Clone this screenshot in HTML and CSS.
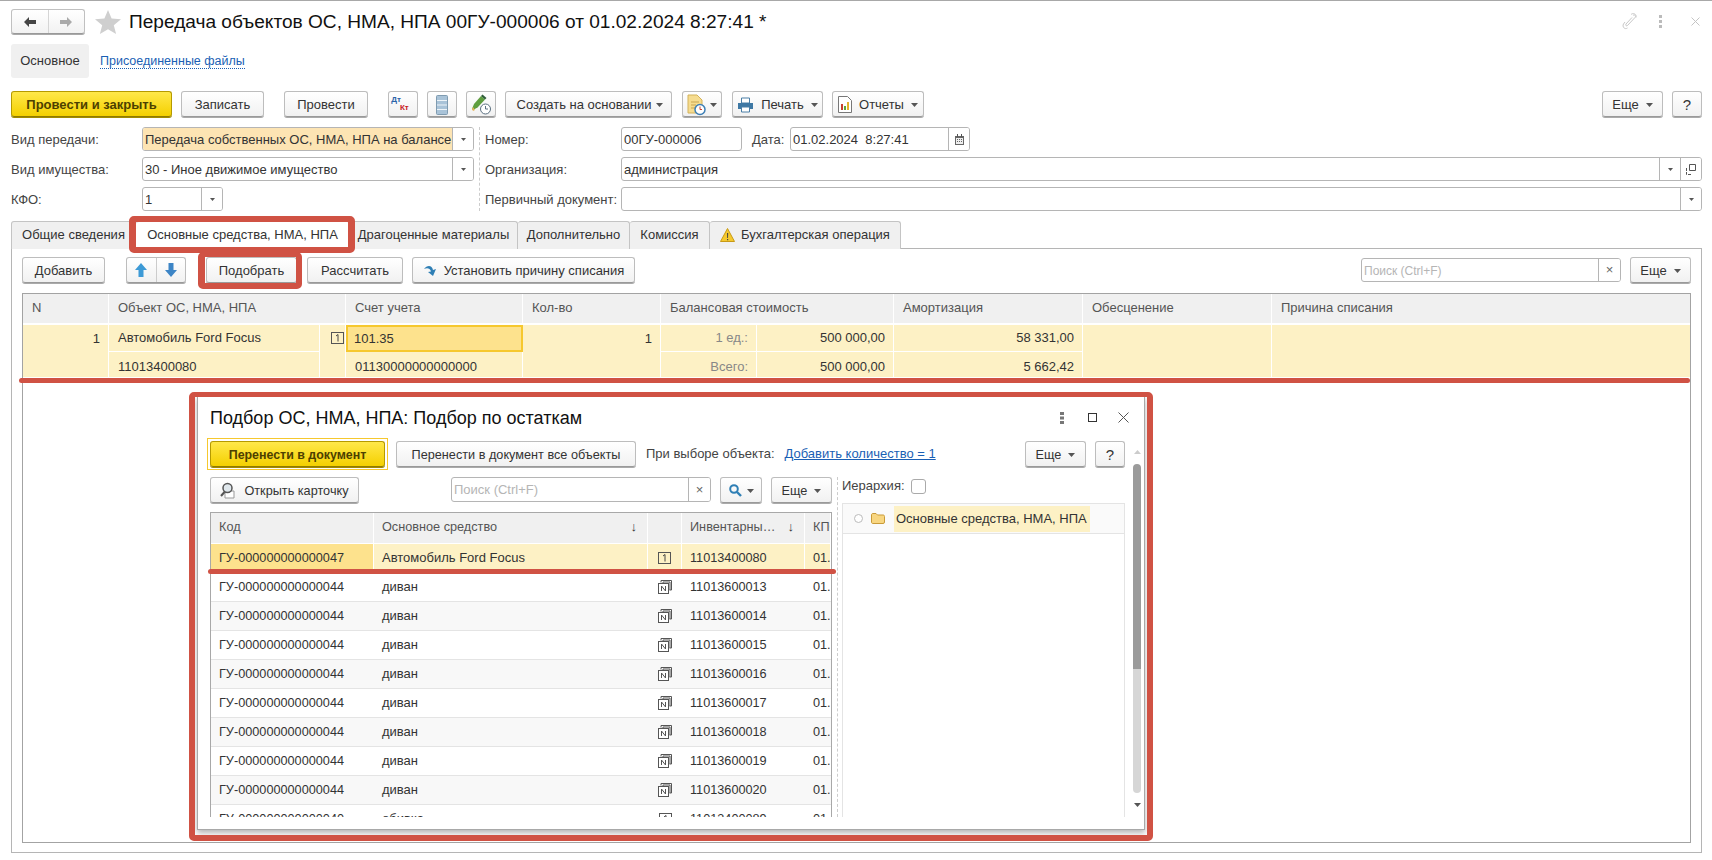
FILE: index.html
```html
<!DOCTYPE html>
<html lang="ru">
<head>
<meta charset="utf-8">
<title>Передача объектов ОС, НМА, НПА</title>
<link rel="stylesheet" href="styles.css">
</head>
<body>
<svg class="defs" aria-hidden="true">
  <symbol id="i-one" viewBox="0 0 13 12"><rect x=".5" y=".5" width="12" height="11" fill="none" stroke="#555"/><path d="M5 4l2-1.500V9.500" fill="none" stroke="#444"/></symbol>
  <symbol id="i-n" viewBox="0 0 14 14"><path d="M3 2.500V.5h10.500v9.500H11.500M5 3V2h7v8" fill="none" stroke="#555"/><rect x=".5" y="3.500" width="10" height="10" fill="#fff" stroke="#555"/><path d="M3.500 11V6l4 5V6" fill="none" stroke="#555"/></symbol>
  <symbol id="i-drop" viewBox="0 0 7 4"><path d="M0 0h7L3.500 4z" fill="#555"/></symbol>
</svg>
<div class="page">
  <header class="titlebar">
    <div class="navgroup">
      <button class="navbtn"><svg width="14" height="12" viewBox="0 0 14 12"><path d="M6 1 1 6l5 5V8h7V4H6z" fill="#444"/></svg></button>
      <button class="navbtn"><svg width="14" height="12" viewBox="0 0 14 12"><path d="M8 1l5 5-5 5V8H1V4h7z" fill="#aaa"/></svg></button>
    </div>
    <svg class="star" width="26" height="24" viewBox="0 0 26 24"><path d="M13 0l3.600 8.600 9.400.7-7.200 6 2.300 8.700-8.100-4.800L4.900 24l2.300-8.700L0 9.300l9.400-.7z" fill="#cfcfcf"/></svg>
    <h1 class="doc-title">Передача объектов ОС, НМА, НПА 00ГУ-000006 от 01.02.2024 8:27:41 *</h1>
    <div class="win-icons">
      <svg class="ic-link" width="17" height="17" viewBox="0 0 17 17"><path d="M11 2.500c1.500-1.500 3.500.5 2 2l-7.500 8c-1 1-2.500-.3-1.500-1.500l6-6.500M9 1.500c2-2 6-.5 5 3M3 9l-1.500 2c-1.500 2.500 1 6 4 4" fill="none" stroke="#c8c8c8"/></svg>
      <svg class="ic-dots" width="3" height="13" viewBox="0 0 3 13"><path d="M0 0h3v3H0zM0 5h3v3H0zM0 10h3v3H0z" fill="#bbb"/></svg>
      <svg class="ic-x" width="9" height="9" viewBox="0 0 9 9"><path d="M.5.500l8 8m0-8l-8 8" stroke="#c4c4c4" fill="none"/></svg>
    </div>
  </header>

  <nav class="sections">
    <a class="section section-active">Основное</a>
    <a class="section section-link">Присоединенные файлы</a>
  </nav>

  <div class="commands">
    <button class="btn btn-primary w-post">Провести и закрыть</button>
    <button class="btn w-save">Записать</button>
    <button class="btn w-run">Провести</button>
    <button class="btn w-ico dtkt"><span class="dt">Дт</span><span class="kt">Кт</span></button>
    <button class="btn w-ico2"><svg width="12" height="20" viewBox="0 0 12 20"><rect x=".5" y=".5" width="11" height="19" rx="1" fill="#a9c3d8" stroke="#7f9bb0"/><path d="M1 5.500h10M1 10h10M1 14.500h10" stroke="#eef4f8"/></svg></button>
    <button class="btn w-ico3"><svg width="22" height="22" viewBox="0 0 22 22"><path d="M2 15l2-5L11 2l4 3.500-7.500 8L3 16z" fill="#5f9e3f"/><path d="M11 2l1.500-1.500 4 3.500L15 5.500z" fill="#2f5d3a"/><path d="M2 15l1 2 2-1-2-3z" fill="#e5b25a"/><circle cx="15.500" cy="15" r="5" fill="#fff" stroke="#5a6f80"/><path d="M15.500 12v3h2.500" fill="none" stroke="#5a6f80"/></svg></button>
    <button class="btn w-create"><span>Создать на основании</span><svg class="drop" width="7" height="4"><use href="#i-drop"/></svg></button>
    <button class="btn w-docs"><svg width="20" height="22" viewBox="0 0 20 22"><path d="M1 1h9l5 5v13H1z" fill="#f6dc8f" stroke="#d3b25a"/><path d="M4 8h8M4 11h5M4 14h4" stroke="#c9a551"/><circle cx="13" cy="15.500" r="5" fill="#fff" stroke="#3d7fb5" stroke-width="1.500"/><path d="M13 12.500v3h2" fill="none" stroke="#c8402f"/></svg><svg class="drop" width="7" height="4"><use href="#i-drop"/></svg></button>
    <button class="btn w-print"><svg width="17" height="16" viewBox="0 0 17 16"><path d="M4.500 1h8v5h-8z" fill="#fff" stroke="#4a7ea6"/><path d="M1 6h15v6h-3v-2H4v2H1z" fill="#3e78a4"/><path d="M4.500 10h8v5h-8z" fill="#fff" stroke="#4a7ea6"/></svg><span>Печать</span><svg class="drop" width="7" height="4"><use href="#i-drop"/></svg></button>
    <button class="btn w-rep"><svg width="14" height="17" viewBox="0 0 14 17"><path d="M.5.500h9l4 4v12H.5z" fill="#fff" stroke="#777"/><path d="M3 8h2v6H3z" fill="#c8402f"/><path d="M6 10h2v4H6z" fill="#5fa53c"/><path d="M9 6h2v8H9z" fill="#e5b32a"/></svg><span>Отчеты</span><svg class="drop" width="7" height="4"><use href="#i-drop"/></svg></button>
    <button class="btn w-more ml-auto">Еще <svg class="drop" width="7" height="4"><use href="#i-drop"/></svg></button>
    <button class="btn w-help">?</button>
  </div>

  <section class="form">
    <label class="lbl r1 c1">Вид передачи:</label>
    <div class="field r1 c2 field-warn"><span class="val">Передача собственных ОС, НМА, НПА на балансе</span><span class="fbtn"><svg width="5" height="3"><use href="#i-drop"/></svg></span></div>
    <label class="lbl r2 c1">Вид имущества:</label>
    <div class="field r2 c2"><span class="val">30 - Иное движимое имущество</span><span class="fbtn"><svg width="5" height="3"><use href="#i-drop"/></svg></span></div>
    <label class="lbl r3 c1">КФО:</label>
    <div class="field r3 c2 field-kfo"><span class="val">1</span><span class="fbtn"><svg width="5" height="3"><use href="#i-drop"/></svg></span></div>
    <div class="vsep"></div>
    <label class="lbl r1 c4">Номер:</label>
    <div class="r1 c5 num-date">
      <div class="field field-num"><span class="val">00ГУ-000006</span></div>
      <label class="lbl lbl-date">Дата:</label>
      <div class="field field-date"><span class="val">01.02.2024&nbsp; 8:27:41</span><span class="fbtn"><svg width="9" height="11" viewBox="0 0 9 11"><path d="M0 2h9v9H0z" fill="#666"/><path d="M1 4h7v6H1z" fill="#eee"/><path d="M2 0h1v3H2zM6 0h1v3H6z" fill="#555"/><path d="M2 5h1v1H2zM4 5h1v1H4zM6 5h1v1H6zM2 7h1v1H2zM4 7h1v1H4zM6 7h1v1H6z" fill="#666"/></svg></span></div>
    </div>
    <label class="lbl r2 c4">Организация:</label>
    <div class="field r2 c5"><span class="val">администрация</span><span class="fbtn"><svg width="5" height="3"><use href="#i-drop"/></svg></span><span class="fbtn"><svg width="10" height="11" viewBox="0 0 10 11"><path d="M3.500.500h6v6h-6z" fill="none" stroke="#555"/><path d="M.5 4v6.500H6" fill="none" stroke="#555" stroke-dasharray="3 1"/></svg></span></div>
    <label class="lbl r3 c4">Первичный документ:</label>
    <div class="field r3 c5"><span class="val"></span><span class="fbtn"><svg width="5" height="3"><use href="#i-drop"/></svg></span></div>
  </section>

  <nav class="tabs">
    <a class="tab t1">Общие сведения</a>
    <a class="tab t2 tab-active">Основные средства, НМА, НПА</a>
    <a class="tab t3">Драгоценные материалы</a>
    <a class="tab t4">Дополнительно</a>
    <a class="tab t5">Комиссия</a>
    <a class="tab t6"><svg width="15" height="14" viewBox="0 0 15 14"><path d="M7.500.500l7 13H.5z" fill="#f5c92e" stroke="#c89a16"/><path d="M7 5h1.200l-.2 5h-.8zM7 11h1.200v1.300H7z" fill="#444"/></svg>Бухгалтерская операция</a>
  </nav>

  <main class="panel">
    <div class="tbl-tools">
      <button class="btn w-add">Добавить</button>
      <div class="arrows">
        <button class="arrow"><svg width="12" height="14" viewBox="0 0 12 14"><path d="M6 0l6 7H8.500v7h-5V7H0z" fill="#3d9ad6"/></svg></button>
        <button class="arrow"><svg width="12" height="14" viewBox="0 0 12 14"><path d="M6 14l6-7H8.500V0h-5v7H0z" fill="#3d85c6"/></svg></button>
      </div>
      <button class="btn w-pick">Подобрать</button>
      <button class="btn w-calc">Рассчитать</button>
      <button class="btn w-reason"><svg width="14" height="14" viewBox="0 0 14 14"><path d="M1 5c3-4 8-4 9 1l3-1-3 7-5-4 3-.5C7 4 4 3.500 1 5z" fill="#2f7fb5"/></svg><span>Установить причину списания</span></button>
      <div class="field field-search ml-auto"><span class="val ph">Поиск (Ctrl+F)</span><span class="fbtn fbtn-x">×</span></div>
      <button class="btn w-more2">Еще <svg class="drop" width="7" height="4"><use href="#i-drop"/></svg></button>
    </div>

    <div class="table-box">
      <div class="tbl">
        <div class="th">N</div>
        <div class="th span2">Объект ОС, НМА, НПА</div>
        <div class="th">Счет учета</div>
        <div class="th">Кол-во</div>
        <div class="th span2">Балансовая стоимость</div>
        <div class="th">Амортизация</div>
        <div class="th">Обесценение</div>
        <div class="th th-last">Причина списания</div>

        <div class="td rows2 right top">1</div>
        <div class="td">Автомобиль Ford Focus</div>
        <div class="td rows2 top icon-cell"><svg width="13" height="12"><use href="#i-one"/></svg></div>
        <div class="td td-sel">101.35</div>
        <div class="td rows2 right top">1</div>
        <div class="td right muted">1 ед.:</div>
        <div class="td right">500 000,00</div>
        <div class="td right">58 331,00</div>
        <div class="td rows2"></div>
        <div class="td rows2 td-last"></div>

        <div class="td low">11013400080</div>
        <div class="td low">01130000000000000</div>
        <div class="td low right muted">Всего:</div>
        <div class="td low right">500 000,00</div>
        <div class="td low right">5 662,42</div>
      </div>
    </div>
  </main>

  <div class="mark mark-tab"></div>
  <div class="mark mark-pick"></div>
  <div class="mark-line line-row"></div>

  <section class="dialog">
    <header class="dlg-head">
      <h2 class="dlg-title">Подбор ОС, НМА, НПА: Подбор по остаткам</h2>
      <svg class="dlg-dots" width="4" height="12" viewBox="0 0 4 12"><path d="M0 0h4v3H0zM0 4.500h4v3H0zM0 9h4v3H0z" fill="#777"/></svg>
      <span class="dlg-square"></span>
      <svg class="dlg-x" width="11" height="11" viewBox="0 0 11 11"><path d="M.5.500l10 10m0-10l-10 10" stroke="#555" fill="none"/></svg>
    </header>
    <div class="dlg-body">
      <div class="dlg-main">
        <div class="dlg-cmd">
          <span class="focus-ring"><button class="btn btn-primary d-move">Перенести в документ</button></span>
          <button class="btn d-all">Перенести в документ все объекты</button>
          <span class="txt d-when">При выборе объекта:</span>
          <a class="d-link">Добавить количество = 1</a>
          <button class="btn d-more ml-auto">Еще <svg class="drop" width="7" height="4"><use href="#i-drop"/></svg></button>
          <button class="btn d-help">?</button>
        </div>
        <div class="dlg-split">
          <div class="dlg-left">
            <div class="dlg-tools">
              <button class="btn d-open"><svg width="17" height="17" viewBox="0 0 17 17"><path d="M5 9h9v7H5z" fill="#fff" stroke="#999"/><circle cx="7.500" cy="6" r="4.500" fill="#dfe7ec" stroke="#555" stroke-width="1.500"/><path d="M4.500 10L1 14" stroke="#555" stroke-width="2"/></svg><span>Открыть карточку</span></button>
              <div class="field d-search"><span class="val ph">Поиск (Ctrl+F)</span><span class="fbtn fbtn-x">×</span></div>
              <button class="btn d-find"><svg width="13" height="13" viewBox="0 0 13 13"><circle cx="5" cy="5" r="3.800" fill="none" stroke="#2f7fb5" stroke-width="2"/><path d="M8 8l4 4" stroke="#2f7fb5" stroke-width="2.400"/></svg><svg class="drop" width="7" height="4"><use href="#i-drop"/></svg></button>
              <button class="btn d-more2">Еще <svg class="drop" width="7" height="4"><use href="#i-drop"/></svg></button>
            </div>
            <div class="dtbl">
              <div class="dth">Код</div>
              <div class="dth dth-sort">Основное средство <span class="sort">↓</span></div>
              <div class="dth"></div>
              <div class="dth dth-sort">Инвентарны… <span class="sort">↓</span></div>
              <div class="dth">КПС</div>

              <div class="drow drow-sel">
                <div class="dtd dtd-cur">ГУ-000000000000047</div><div class="dtd dtd-name">Автомобиль Ford Focus</div><div class="dtd dtd-ic"><svg width="13" height="12"><use href="#i-one"/></svg></div><div class="dtd">11013400080</div><div class="dtd">01.</div>
              </div>
              <div class="drow">
                <div class="dtd">ГУ-000000000000044</div><div class="dtd dtd-name">диван</div><div class="dtd dtd-ic"><svg width="14" height="14"><use href="#i-n"/></svg></div><div class="dtd">11013600013</div><div class="dtd">01.</div>
              </div>
              <div class="drow drow-alt">
                <div class="dtd">ГУ-000000000000044</div><div class="dtd dtd-name">диван</div><div class="dtd dtd-ic"><svg width="14" height="14"><use href="#i-n"/></svg></div><div class="dtd">11013600014</div><div class="dtd">01.</div>
              </div>
              <div class="drow">
                <div class="dtd">ГУ-000000000000044</div><div class="dtd dtd-name">диван</div><div class="dtd dtd-ic"><svg width="14" height="14"><use href="#i-n"/></svg></div><div class="dtd">11013600015</div><div class="dtd">01.</div>
              </div>
              <div class="drow drow-alt">
                <div class="dtd">ГУ-000000000000044</div><div class="dtd dtd-name">диван</div><div class="dtd dtd-ic"><svg width="14" height="14"><use href="#i-n"/></svg></div><div class="dtd">11013600016</div><div class="dtd">01.</div>
              </div>
              <div class="drow">
                <div class="dtd">ГУ-000000000000044</div><div class="dtd dtd-name">диван</div><div class="dtd dtd-ic"><svg width="14" height="14"><use href="#i-n"/></svg></div><div class="dtd">11013600017</div><div class="dtd">01.</div>
              </div>
              <div class="drow drow-alt">
                <div class="dtd">ГУ-000000000000044</div><div class="dtd dtd-name">диван</div><div class="dtd dtd-ic"><svg width="14" height="14"><use href="#i-n"/></svg></div><div class="dtd">11013600018</div><div class="dtd">01.</div>
              </div>
              <div class="drow">
                <div class="dtd">ГУ-000000000000044</div><div class="dtd dtd-name">диван</div><div class="dtd dtd-ic"><svg width="14" height="14"><use href="#i-n"/></svg></div><div class="dtd">11013600019</div><div class="dtd">01.</div>
              </div>
              <div class="drow drow-alt">
                <div class="dtd">ГУ-000000000000044</div><div class="dtd dtd-name">диван</div><div class="dtd dtd-ic"><svg width="14" height="14"><use href="#i-n"/></svg></div><div class="dtd">11013600020</div><div class="dtd">01.</div>
              </div>
              <div class="drow">
                <div class="dtd">ГУ-000000000000040</div><div class="dtd dtd-name">обивка</div><div class="dtd dtd-ic"><svg width="13" height="12"><use href="#i-one"/></svg></div><div class="dtd">11013400089</div><div class="dtd">01.</div>
              </div>
            </div>
          </div>
          <div class="splitter"></div>
          <div class="dlg-right">
            <div class="hier"><span class="txt">Иерархия:</span><span class="check"></span></div>
            <div class="tree">
              <div class="tree-row">
                <span class="radio"></span>
                <svg width="14" height="11" viewBox="0 0 14 11"><path d="M.5 2c0-1 .5-1.500 1.500-1.500h3L6.500 2H12c1 0 1.500.5 1.500 1.500V9c0 1-.5 1.500-1.500 1.500H2C1 10.500.5 10 .5 9z" fill="#f8d681" stroke="#c99b3a"/></svg>
                <span class="tree-text">Основные средства, НМА, НПА</span>
              </div>
            </div>
          </div>
        </div>
      </div>
      <div class="scroll">
        <svg class="sc-arrow" width="7" height="4" viewBox="0 0 7 4"><path d="M0 4h7L3.500 0z" fill="#ccc"/></svg>
        <div class="sc-thumb"></div>
        <div class="sc-rest"></div>
        <svg class="sc-arrow" width="7" height="4"><use href="#i-drop"/></svg>
      </div>
    </div>
  </section>
  <div class="mark mark-dialog"></div>
  <div class="mark-line line-dlg"></div>
</div>
</body>
</html>
```
FILE: styles.css
```css
* { box-sizing: border-box; }
html, body { margin: 0; padding: 0; background: #fff; }
body { font: 13px/16px "Liberation Sans", Arial, sans-serif; color: #333; overflow: hidden; }
button { font: inherit; color: inherit; }
.defs { position: absolute; width: 0; height: 0; }
.page { position: relative; width: 1712px; height: 860px; border-top: 1px solid #a8a8a8; padding: 8px 10px 0 11px; display: flex; flex-direction: column; }

/* title row */
.titlebar { display: flex; align-items: center; height: 25px; flex: none; }
.navgroup { display: flex; width: 74px; height: 25px; border: 1px solid #c0c0c0; border-bottom-color: #999; border-radius: 3px; background: linear-gradient(#fff, #f2f2f2); box-shadow: 0 1px 0 #aaa; }
.navbtn { flex: 1; border: 0; background: none; padding: 0; display: flex; align-items: center; justify-content: center; }
.navbtn + .navbtn { border-left: 1px solid #d5d5d5; }
.star { margin-left: 10px; flex: none; }
.doc-title { margin: 0 0 0 8px; font-size: 19.1px; font-weight: 400; color: #111; line-height: 24px; white-space: nowrap; }
.win-icons { margin-left: auto; display: flex; align-items: center; }
.ic-link { margin-right: 20px; }
.ic-dots { margin-right: 29px; }
.ic-x { margin-right: 2px; }

/* section tabs */
.sections { display: flex; align-items: center; height: 34px; margin-top: 10px; flex: none; }
.section-active { width: 78px; height: 34px; background: #f0f0f0; border-radius: 3px; display: flex; align-items: center; justify-content: center; }
.section-link { margin-left: 11px; color: #1a5fb4; border-bottom: 1px dotted #1a5fb4; line-height: 14px; font-size: 12.5px; }

/* buttons */
.btn { flex: none; display: inline-flex; align-items: center; justify-content: center; gap: 7px; height: 26px; padding: 1px 0 0; border: 1px solid #bdbdbd; border-bottom-color: #9a9a9a; border-radius: 3px; background: linear-gradient(#fff, #f1f1f1); box-shadow: 0 1px 0 #aaa; white-space: nowrap; }
.btn-primary { background: linear-gradient(#ffe84a, #f4d000); border-color: #b59a00; border-bottom-color: #8f7a00; box-shadow: 0 1px 0 #a08a00; font-weight: 700; color: #4d4000; }
.drop { flex: none; }
.ml-auto { margin-left: auto; }

.commands { display: flex; height: 26px; margin-top: 13px; flex: none; }
.w-post { width: 161px; margin-right: 9px; }
.w-save { width: 83px; margin-right: 20px; }
.w-run { width: 84px; margin-right: 20px; }
.w-ico { width: 30px; margin-right: 9px; }
.w-ico2 { width: 30px; margin-right: 9px; }
.w-ico3 { width: 30px; margin-right: 9px; }
.w-create { width: 167px; margin-right: 10px; gap: 5px; padding-left: 3px; }
.w-docs { width: 40px; margin-right: 10px; gap: 3px; }
.w-print { width: 91px; margin-right: 9px; }
.w-rep { width: 92px; }
.w-more { width: 61px; margin-right: 9px; }
.w-help { width: 30px; font-size: 15px; }
.dtkt { position: relative; font-size: 8px; line-height: 8px; font-weight: 700; gap: 0; }
.dt { color: #2a63a8; margin: -9px 0 0 -6px; }
.kt { color: #c8201c; margin: 6px 0 0 -1px; }

/* form */
.form { display: grid; grid-template-columns: 131px 332px 11px 136px 1fr; grid-template-rows: repeat(3, 24px); row-gap: 6px; margin-top: 10px; flex: none; }
.lbl { display: flex; align-items: center; padding-top: 1px; white-space: nowrap; color: #444; }
.r1 { grid-row: 1; } .r2 { grid-row: 2; } .r3 { grid-row: 3; }
.c1 { grid-column: 1; } .c2 { grid-column: 2; } .c4 { grid-column: 4; } .c5 { grid-column: 5; }
.field { display: flex; align-items: stretch; height: 24px; background: #fff; border: 1px solid #b5b5b5; border-radius: 3px; overflow: hidden; }
.val { flex: 1; min-width: 0; padding: 1px 2px 0; display: flex; align-items: center; white-space: nowrap; overflow: hidden; color: #333; }
.fbtn { flex: none; width: 21px; border-left: 1px solid #b5b5b5; display: flex; align-items: center; justify-content: center; background: #fff; }
.field-warn .val { background: #fde4b3; }
.field-kfo { width: 81px; }
.vsep { grid-column: 3; grid-row: 1 / 4; margin-left: 5px; border-left: 1px dashed #ccc; margin-top: 0; }
.num-date { display: flex; }
.field-num { width: 121px; }
.lbl-date { margin: 0 5px 0 10px; width: 33px; }
.field-date { width: 180px; }

/* tabs */
.tabs { display: flex; height: 27px; margin-top: 10px; flex: none; }
.tab { display: flex; align-items: center; justify-content: center; gap: 6px; height: 28px; padding-bottom: 1px; background: #f0f0f0; border: 1px solid #c4c4c4; border-left-width: 0; border-bottom: 0; border-radius: 3px 3px 0 0; white-space: nowrap; position: relative; }
.t1 { width: 125px; border-left-width: 1px; } .t2 { width: 214px; } .t3 { width: 168px; } .t4 { width: 112px; } .t5 { width: 80px; } .t6 { width: 191px; }
.tab-active { background: #fff; z-index: 1; }

/* panel */
.panel { flex: none; width: 1691px; height: 605px; border: 1px solid #b5b5b5; padding: 8px 10px 9px; display: flex; flex-direction: column; }
.tbl-tools { display: flex; height: 26px; flex: none; }
.w-add { width: 83px; margin-right: 21px; }
.arrows { display: flex; width: 60px; height: 26px; margin-right: 20px; border: 1px solid #bdbdbd; border-bottom-color: #9a9a9a; border-radius: 3px; background: linear-gradient(#fff, #f1f1f1); box-shadow: 0 1px 0 #aaa; }
.arrow { flex: 1; padding: 0; border: 0; background: none; display: flex; align-items: center; justify-content: center; }
.arrow + .arrow { border-left: 1px solid #ccc; }
.w-pick { width: 91px; margin-right: 10px; }
.w-calc { width: 96px; margin-right: 9px; }
.w-reason { width: 223px; }
.field-search { width: 260px; margin-top: 1px; }
.ph { color: #b5b5b5; font-size: 12px; }
.fbtn-x { color: #666; font-size: 13px; width: 22px; }
.w-more2 { width: 61px; margin-left: 9px; }

.table-box { flex: 1; margin-top: 10px; border: 1px solid #a3a3a3; }
.tbl { display: grid; grid-template-columns: 86px 211px 26px 177px 138px 96px 137px 189px 189px 1fr; grid-template-rows: 31px 27px 26px; }
.th { background: #f0f0f0; display: flex; align-items: center; padding: 0 8px 1px 9px; border-right: 1px solid #fff; border-bottom: 2px solid #fff; color: #555; }
.th-last { border-right: 0; }
.span2 { grid-column: span 2; }
.td { background: #fdf1c5; display: flex; align-items: center; padding: 0 8px 0 9px; border-right: 1px solid #fff; border-bottom: 1px solid #fff; color: #333; white-space: nowrap; }
.td-last { border-right: 0; }
.rows2 { grid-row: span 2; }
.right { justify-content: flex-end; }
.top { align-items: flex-start; padding-top: 6px; }
.low { padding-top: 4px; }
.icon-cell { padding: 7px 0 0 11px; justify-content: flex-start; }
.muted { color: #888; }
.td-sel { background: #fde28d; border: 2px solid #f6c82e; padding: 0 6px; }

/* annotations */
.mark { position: absolute; border-style: solid; border-color: #d05244; border-radius: 5px; pointer-events: none; z-index: 5; }
.mark-tab { left: 129px; top: 215px; width: 226px; height: 37px; border-width: 6px 7px; }
.mark-pick { left: 198px; top: 251px; width: 104px; height: 37px; border-width: 5px 6px 6px 7px; }
.mark-dialog { left: 189px; top: 391px; width: 964px; height: 449px; border-width: 5px 6px 6px 6px; }
.mark-line { position: absolute; height: 5px; background: #d05244; border-radius: 3px; z-index: 5; }
.line-row { left: 19px; top: 377px; width: 1671px; }
.line-dlg { left: 208px; top: 568px; width: 628px; }

/* dialog */
.dialog { position: absolute; left: 197px; top: 395px; width: 948px; height: 434px; font-size: 12.7px; background: #fff; border: 1px solid #a8a8a8; box-shadow: 0 3px 6px rgba(0,0,0,.3); z-index: 4; display: flex; flex-direction: column; padding: 0 3px 12px 12px; overflow: hidden; }
.dlg-head { display: flex; align-items: center; height: 44px; padding-bottom: 3px; flex: none; }
.dlg-title { margin: 0; font-size: 18px; font-weight: 400; color: #111; white-space: nowrap; line-height: 24px; }
.dlg-dots { margin-left: auto; }
.dlg-square { width: 9px; height: 9px; border: 1px solid #333; margin-left: 24px; }
.dlg-x { margin: 0 12px 0 21px; }
.dlg-body { flex: 1; min-height: 0; display: flex; }
.dlg-main { width: 915px; display: flex; flex-direction: column; }
.dlg-cmd { display: flex; align-items: center; height: 26px; flex: none; }
.focus-ring { display: flex; padding: 2px; margin-left: -3px; border: 1px solid #f6c82e; margin-right: 8px; }
.d-move { width: 175px; font-size: 12.4px; }
.d-all { width: 240px; margin-right: 10px; }
.d-when { margin-right: 10px; font-size: 12.8px; }
.txt { color: #444; white-space: nowrap; font-size: 13px; }
.d-link { color: #1a5fb4; text-decoration: underline; white-space: nowrap; font-size: 13px; }
.d-more { width: 61px; margin-right: 9px; }
.d-help { width: 30px; font-size: 15px; }
.dlg-split { flex: 1; min-height: 0; display: flex; margin-top: 10px; }
.dlg-left { width: 622px; display: flex; flex-direction: column; }
.dlg-tools { display: flex; height: 26px; flex: none; }
.d-open { width: 149px; margin-right: 92px; }
.d-search { width: 260px; margin-right: 9px; height: 25px; }
.d-search .ph { font-size: 13px; }
.d-find { width: 42px; margin-right: 9px; gap: 5px; }
.d-more2 { width: 61px; }
.dtbl { margin-top: 9px; flex: 1; min-height: 0; overflow: hidden; border: 1px solid #a8a8a8; border-bottom: 0; display: grid; grid-template-columns: 163px 274px 34px 123px 26px; grid-template-rows: 31px repeat(10, 29px); align-content: start; }
.dth { background: #f0f0f0; height: 31px; border-right: 1px solid #fff; border-bottom: 1px solid #fff; display: flex; align-items: center; padding: 0 8px 2px; color: #555; white-space: nowrap; overflow: hidden; }
.dth-sort { justify-content: space-between; }
.sort { color: #333; font-size: 13px; margin-right: 2px; }
.drow { display: contents; }
.dtd { display: flex; align-items: center; padding: 0 8px; border-bottom: 1px solid #e4e4e4; white-space: nowrap; overflow: hidden; color: #333; background: #fff; }
.dtd-name { font-size: 13px; }
.drow-alt .dtd { background: #f8f8f8; }
.drow-sel .dtd { background: #fdf1c5; border-right: 1px solid #fff; border-bottom: 0; padding-bottom: 2px; }
.drow-sel .dtd-cur { background: #fde28d; }
.dtd-ic { padding: 0; justify-content: center; }
.splitter { width: 6px; flex: none; margin-left: 5px; border-left: 1px dashed #ccc; }
.dlg-right { flex: 1; min-width: 0; display: flex; flex-direction: column; margin-left: -1px; }
.hier { display: flex; align-items: center; gap: 6px; height: 16px; margin: 1px 0 9px; flex: none; }
.check { width: 15px; height: 15px; border: 1px solid #aaa; border-radius: 3px; background: #fff; }
.tree { flex: 1; border: 1px solid #e4e4e4; border-bottom: 0; }
.tree-row { height: 30px; background: #fafafa; border-bottom: 1px solid #e4e4e4; display: flex; align-items: center; padding-left: 11px; }
.radio { width: 9px; height: 9px; border: 1px solid #bbb; border-radius: 50%; background: #fff; margin-right: 8px; }
.tree-text { margin-left: 9px; background: #fdf1c5; height: 26px; display: flex; align-items: center; padding: 0 2px; width: 196px; white-space: nowrap; font-size: 13px; }
.scroll { width: 8px; margin-left: 8px; display: flex; flex-direction: column; align-items: center; padding-top: 9px; }
.sc-arrow { flex: none; }
.sc-thumb { width: 8px; height: 205px; margin-top: 10px; background: #9b9b9b; border-radius: 4px 4px 0 0; flex: none; }
.sc-rest { width: 8px; height: 124px; background: #d6d6d6; border-radius: 0 0 4px 4px; flex: none; margin-bottom: 10px; }
```
